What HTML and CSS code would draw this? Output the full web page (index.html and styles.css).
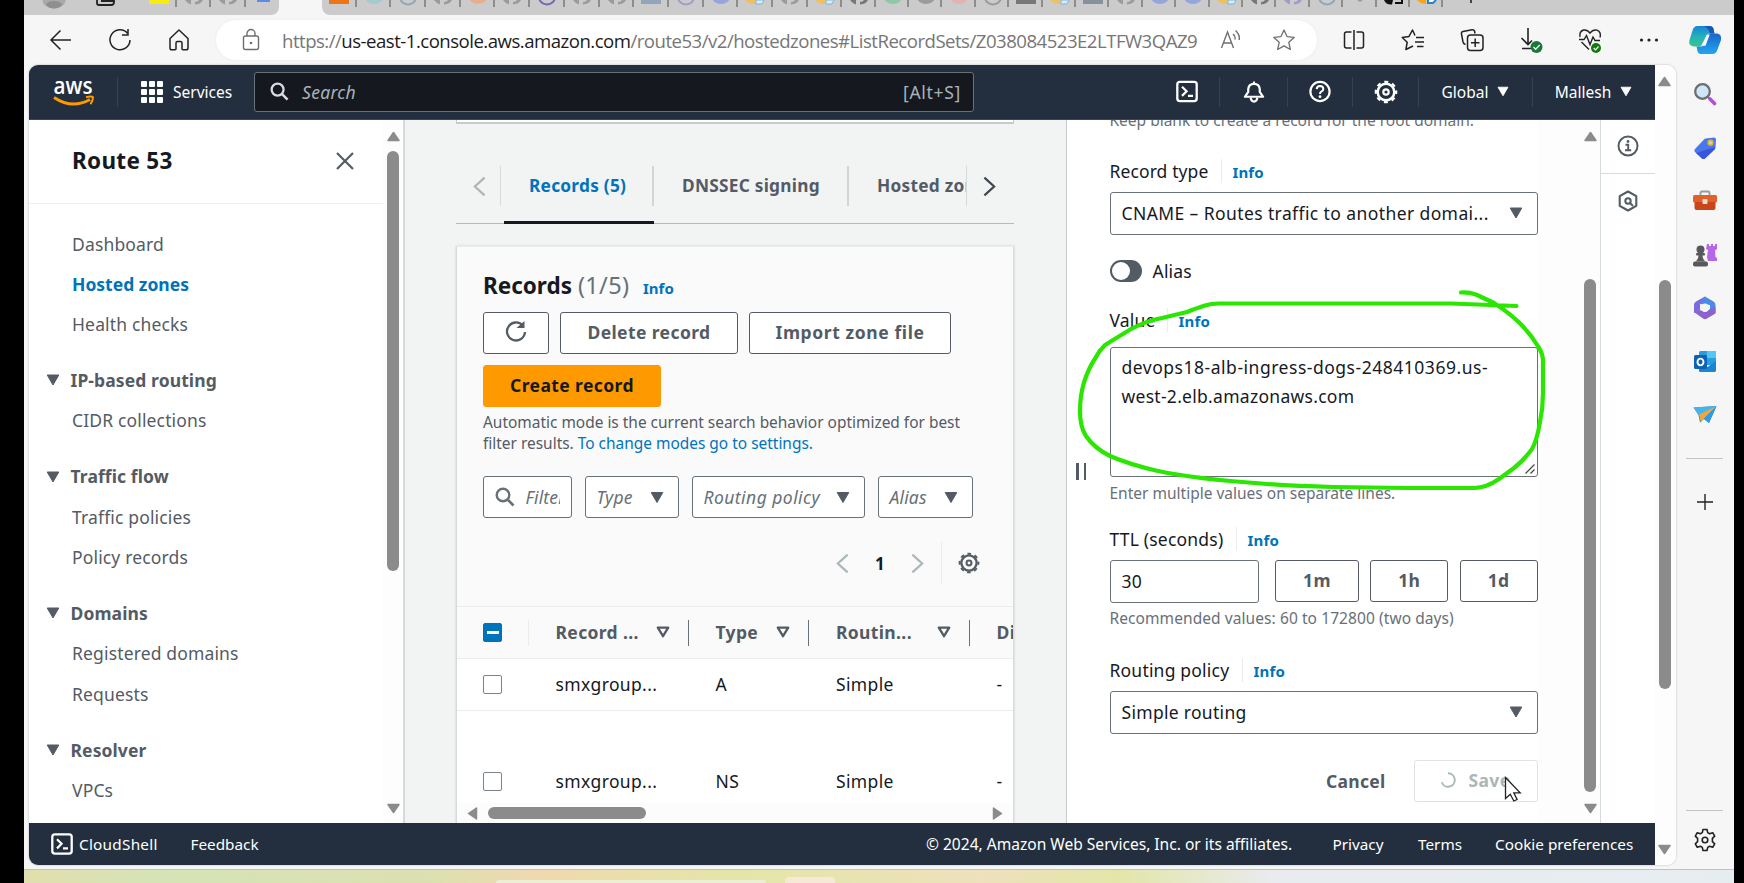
FILE: index.html
```html
<!DOCTYPE html>
<html lang="en">
<head>
<meta charset="utf-8">
<title>Route 53 Console</title>
<link rel="stylesheet" href="styles.css">
</head>
<body>
<svg class="defs" aria-hidden="true">
  <defs>
    <symbol id="down" viewBox="0 0 14 12"><path d="M1.200 1h11.600L7 11z" fill="currentColor" stroke="currentColor" stroke-linejoin="round"/></symbol>
    <symbol id="sort" viewBox="0 0 14 12"><path d="M1.800 1.600h10.400L7 10.200z" fill="none" stroke="currentColor" stroke-width="2.300" stroke-linejoin="round"/></symbol>
    <symbol id="scroll-up" viewBox="0 0 13 11"><path d="M6.5 1.5 12 9.5H1z" fill="#8b8b8b" stroke="#8b8b8b" stroke-width="1.5" stroke-linejoin="round"/></symbol>
    <symbol id="scroll-down" viewBox="0 0 13 11"><path d="M6.5 9.5 12 1.5H1z" fill="#8b8b8b" stroke="#8b8b8b" stroke-width="1.5" stroke-linejoin="round"/></symbol>
    <symbol id="lens" viewBox="0 0 20 20"><circle cx="8" cy="8" r="6.3" fill="none" stroke="currentColor" stroke-width="2.4"/><path d="m12.5 12.5 6 6" stroke="currentColor" stroke-width="2.6"/></symbol>
    <symbol id="terminal" viewBox="0 0 22 22"><rect x="1.3" y="1.3" width="19.4" height="19.4" rx="2.6" fill="none" stroke="currentColor" stroke-width="2.3"/><path d="m6 6.2 4.6 4.6L6 15.4M12 15.3h5" fill="none" stroke="currentColor" stroke-width="2.2"/></symbol>
    <symbol id="cog" viewBox="0 0 24 24"><circle cx="12" cy="12" r="8.300" fill="none" stroke="currentColor" stroke-width="2.500"/><circle cx="12" cy="12" r="10.200" fill="none" stroke="currentColor" stroke-width="2.200" stroke-dasharray="4 4.011" stroke-dashoffset="2"/><circle cx="12" cy="12" r="2.700" fill="none" stroke="currentColor" stroke-width="2.200"/></symbol>
    <symbol id="prev" viewBox="0 0 14 22"><path d="M12.500 1.500 2 11l10.500 9.500" fill="none" stroke="currentColor" stroke-width="2.400"/></symbol>
    <symbol id="next" viewBox="0 0 14 22"><path d="M1.500 1.500 12 11 1.500 20.500" fill="none" stroke="currentColor" stroke-width="2.400"/></symbol>
    <symbol id="t-ring" viewBox="0 0 22 6"><path d="M3 -3a8 7.500 0 0 0 16 0" fill="none" stroke="currentColor" stroke-width="2"/></symbol>
    <symbol id="t-blob" viewBox="0 0 22 6"><ellipse cx="11" cy="-3" rx="9" ry="7" fill="currentColor"/></symbol>
    <symbol id="t-box" viewBox="0 0 22 6"><path d="M1 0h20v4H1z" fill="currentColor"/></symbol>
    <symbol id="t-globe" viewBox="0 0 22 6"><path d="M2 0q2 3 6 4.500V0zM12 4.500Q18 4 20 0h-4q-1 2-4 2z" fill="currentColor"/></symbol>
    <symbol id="t-duo" viewBox="0 0 22 6"><path d="M1 0h10v4Q4 4 1 0z" fill="#ecc063"/><path d="M12 0h8l-2 4h-6z" fill="#dcecf4" stroke="#7cb5d4"/></symbol>
  </defs>
</svg>

<div class="window">
  <div class="tabstrip">
    <div class="tabs-left">
      <svg class="t-avatar" viewBox="0 0 24 9"><ellipse cx="12" cy="0" rx="11.500" ry="8.500" fill="#a9a9a9"/><path d="M4 5q1-4 8-4t8 4q-3 3.500-8 3.500T4 5z" fill="#8f8f8f"/></svg>
      <svg class="t-spaces" viewBox="0 0 22 7"><path d="M2 0v3q0 2 2 2h12q3 0 3-3V0M6 1h13" fill="none" stroke="#222" stroke-width="1.800"/></svg>
      <i class="tb c-yellow"><svg><use href="#t-box"/></svg></i>
      <i class="tb c-grey"><svg><use href="#t-globe"/></svg></i>
      <i class="tb c-grey"><svg><use href="#t-globe"/></svg></i>
      <i class="tb last c-blue"><svg viewBox="0 0 22 6"><path d="M5 0h13v2H5z" fill="currentColor"/></svg></i>
    </div>
    <div class="tab-active"></div>
    <div class="tabs-right">
      <i class="tb c-orange"><svg><use href="#t-box"/></svg></i>
      <i class="tb c-teal"><svg><use href="#t-blob"/></svg></i>
      <i class="tb c-steel"><svg><use href="#t-ring"/></svg></i>
      <i class="tb c-grey"><svg><use href="#t-globe"/></svg></i>
      <i class="tb c-peach"><svg><use href="#t-blob"/></svg></i>
      <i class="tb c-grey"><svg><use href="#t-globe"/></svg></i>
      <i class="tb c-purple"><svg><use href="#t-ring"/></svg></i>
      <i class="tb c-grey"><svg><use href="#t-globe"/></svg></i>
      <i class="tb c-grey"><svg><use href="#t-globe"/></svg></i>
      <i class="tb c-steel"><svg><use href="#t-box"/></svg></i>
      <i class="tb c-lilac"><svg><use href="#t-ring"/></svg></i>
      <i class="tb c-peri"><svg><use href="#t-blob"/></svg></i>
      <i class="tb"><svg><use href="#t-duo"/></svg></i>
      <i class="tb c-grey"><svg><use href="#t-globe"/></svg></i>
      <i class="tb"><svg><use href="#t-duo"/></svg></i>
      <i class="tb n c-dark"><svg><use href="#t-globe"/></svg></i>
      <i class="tb n c-green"><svg><use href="#t-blob"/></svg></i>
      <i class="tb n c-grey"><svg><use href="#t-blob"/></svg></i>
      <i class="tb n c-rose"><svg><use href="#t-blob"/></svg></i>
      <i class="tb n c-grey"><svg><use href="#t-ring"/></svg></i>
      <i class="tb n c-dark"><svg><use href="#t-box"/></svg></i>
      <i class="tb n"><svg><use href="#t-duo"/></svg></i>
      <i class="tb n c-slate"><svg><use href="#t-box"/></svg></i>
      <i class="tb n c-grey"><svg><use href="#t-globe"/></svg></i>
      <i class="tb n c-peri"><svg><use href="#t-blob"/></svg></i>
      <i class="tb n c-peri"><svg><use href="#t-blob"/></svg></i>
      <i class="tb n"><svg><use href="#t-duo"/></svg></i>
      <i class="tb n c-dark"><svg><use href="#t-globe"/></svg></i>
      <i class="tb n c-lilac"><svg><use href="#t-globe"/></svg></i>
      <i class="tb n c-steel"><svg><use href="#t-ring"/></svg></i>
      <i class="tb n c-grey"><svg viewBox="0 0 22 6"><path d="M8 0h6l-3 2z" fill="currentColor"/></svg></i>
      <i class="tb n c-black"><svg viewBox="0 0 22 6"><path d="M1 0q2 5 8 4.500L10 0z" fill="currentColor"/><path d="M12 3h7V0" fill="none" stroke="currentColor" stroke-width="2"/></svg></i>
      <i class="tb n"><svg viewBox="0 0 22 6"><path d="M1 0h9v4Q4 4 1 0z" fill="#f3a71c"/><path d="M12 0v3h5l3-3" fill="#fff" stroke="#2585c8" stroke-width="2"/></svg></i>
      <svg class="t-plus" viewBox="0 0 4 3"><path d="M2 0v3" stroke="#222" stroke-width="1.600"/></svg>
    </div>
  </div>

  <div class="toolbar">
    <svg class="i-back" viewBox="0 0 24 24"><path d="M22 12H2.500M11.500 2.500 2 12l9.500 9.500" fill="none" stroke="#222" stroke-width="1.500"/></svg>
    <svg class="i-reload" viewBox="0 0 24 24"><path d="M19.500 5.200A10 10 0 1 0 22 12M20 1v6h-6" fill="none" stroke="#222" stroke-width="1.500"/></svg>
    <svg class="i-home" viewBox="0 0 24 24"><path d="M3 10.500 12 2l9 8.500V20q0 1.800-1.800 1.800H16q-1 0-1-1V15q0-1.500-1.500-1.500h-3Q9 13.500 9 15v5.800q0 1-1 1H4.800Q3 21.800 3 20z" fill="none" stroke="#222" stroke-width="1.500" stroke-linejoin="round"/></svg>
    <div class="address">
      <svg class="i-lock" viewBox="0 0 20 24"><rect x="2.500" y="8" width="15" height="13.500" rx="2" fill="none" stroke="#6f6f6f" stroke-width="1.400"/><path d="M6 8V5.500a4 4 0 0 1 8 0V8" fill="none" stroke="#6f6f6f" stroke-width="1.400"/><circle cx="10" cy="15" r="1.300" fill="#6f6f6f"/></svg>
      <div class="url">https://<b>us-east-1.console.aws.amazon.com</b>/route53/v2/hostedzones#ListRecordSets/Z038084523E2LTFW3QAZ9</div>
      <svg class="i-read" viewBox="0 0 22 24"><path d="M1.500 20 7.500 4l6 16M3.500 15h8M13 6q2.500 2 2 5.500M15.500 2.500q4.500 4 3.800 9.500" fill="none" stroke="#6f6f6f" stroke-width="1.400"/></svg>
      <svg class="i-star" viewBox="0 0 24 24"><path d="m12 2 3 6.600 7.200.8-5.400 4.900 1.500 7.200L12 17.900l-6.300 3.600 1.500-7.200L1.800 9.400 9 8.600z" fill="none" stroke="#6f6f6f" stroke-width="1.300" stroke-linejoin="round"/></svg>
    </div>
    <div class="tool-icons">
      <svg viewBox="0 0 24 24"><path d="M9.500 4H4.500Q2.500 4 2.500 6v12q0 2 2 2h5M14.500 4h5q2 0 2 2v12q0 2-2 2h-5M12 2v20" fill="none" stroke="#222" stroke-width="1.500"/></svg>
      <svg viewBox="0 0 24 24"><path d="M14 7.500 11.500 2 8 8.400 1.200 9.500l5 4.800-1.300 7.200L12 18M15 9.500h8M14 14h9M16 18.500h6.500" fill="none" stroke="#222" stroke-width="1.500" stroke-linejoin="round"/></svg>
      <svg viewBox="0 0 24 24"><path d="M5.500 16.500Q3.500 16 3 14L1.500 6Q1 4 3 3.500L12 1.700q2-.3 2.600 1.500L15 5.500" fill="none" stroke="#222" stroke-width="1.500"/><rect x="7.500" y="7" width="15.500" height="15.500" rx="3" fill="#f6f6f6" stroke="#222" stroke-width="1.500"/><path d="M15.200 10.500v8.500M11 14.700h8.500" stroke="#222" stroke-width="1.500"/></svg>
      <svg viewBox="0 0 24 24"><path d="M9 0v16M2.500 10 9 16.500l4-4M3 20.500h9" fill="none" stroke="#222" stroke-width="1.600"/><circle cx="17.500" cy="19" r="6" fill="#157a35"/><path d="m14.500 19 2.200 2.200 4-4.200" fill="none" stroke="#fff" stroke-width="1.300"/></svg>
      <svg viewBox="0 0 24 24"><path d="M2 9Q1 3.500 5.500 2 9.500 1.500 12 5q3-4 7-2.800Q23.500 4 22 9.500M3.500 14 11 21.500M1 11.500h5l2.500-4 3.500 9L15 9l2 3.500h5" fill="none" stroke="#222" stroke-width="1.400"/><circle cx="18" cy="20" r="5" fill="#107c10"/><path d="m15.700 20 1.800 1.800 3-3.300" fill="none" stroke="#fff" stroke-width="1.200"/></svg>
      <svg viewBox="0 0 24 24"><g fill="#222"><circle cx="4.500" cy="12" r="1.600"/><circle cx="12" cy="12" r="1.600"/><circle cx="19.500" cy="12" r="1.600"/></g></svg>
      <svg class="copilot" viewBox="0 0 34 32">
        <defs><linearGradient id="cg1" x1="0" y1="0" x2="0" y2="1"><stop offset="0" stop-color="#1683d8"/><stop offset=".55" stop-color="#27b3b8"/><stop offset="1" stop-color="#35c58b"/></linearGradient><linearGradient id="cg2" x1="0" y1="0" x2="0" y2="1"><stop offset="0" stop-color="#1d63c8"/><stop offset="1" stop-color="#21a6f0"/></linearGradient></defs>
        <path d="M9 1h13q3 0 4 3l1 5h-5q-3 0-4 4l-3 7q-1 3-5 3H5q-6-1-4.500-7L4 5q1.500-4 5-4z" fill="url(#cg1)"/>
        <path d="M25 31H13q-3 0-4-3l-1-5h4q3 0 4-4l3-7q1-3 5-3h6q5 1 4 7l-4 11q-1.500 4-5 4z" fill="url(#cg2)"/>
        <path d="M16 1h6q3 0 4 3l1 5h-5q-1-6-6-8z" fill="#1856b5"/><path d="m18.500 12-4.500 11h-2q3 0 4-4l2-5z" fill="#e9fbff"/><path d="M19 10.500h3L17.500 22h-4.500z" fill="#fff"/>
      </svg>
    </div>
  </div>

  <div class="browser-body">
    <div class="page">
      <div class="console">
        <header class="nav">
          <svg class="logo" viewBox="0 0 42 30"><text x="0.500" y="15.500" class="logo-text" textLength="39" lengthAdjust="spacingAndGlyphs">aws</text><path d="M1 19.500q18 12 36 2" fill="none" stroke="#f90" stroke-width="3"/><path d="M33 19.200q5.500-1.300 7 0 0 3.500-2.500 7" fill="none" stroke="#f90" stroke-width="2"/></svg>
          <i class="nsep s1"></i>
          <svg class="i-grid" viewBox="0 0 22 22"><g fill="#fff"><rect width="6" height="6" rx="1"/><rect x="8" width="6" height="6" rx="1"/><rect x="16" width="6" height="6" rx="1"/><rect y="8" width="6" height="6" rx="1"/><rect x="8" y="8" width="6" height="6" rx="1"/><rect x="16" y="8" width="6" height="6" rx="1"/><rect y="16" width="6" height="6" rx="1"/><rect x="8" y="16" width="6" height="6" rx="1"/><rect x="16" y="16" width="6" height="6" rx="1"/></g></svg>
          <span class="services">Services</span>
          <div class="search"><svg><use href="#lens"/></svg><em>Search</em><span>[Alt+S]</span></div>
          <div class="nav-right">
            <span class="nicon n1"><svg><use href="#terminal"/></svg></span>
            <span class="nicon n2"><svg viewBox="0 0 22 24"><path d="M11 1.500v2M1.500 17.500h19L17 12.500V9.500q-.5-5.500-6-5.500T5 9.500v3z" fill="none" stroke="#fff" stroke-width="2.300" stroke-linejoin="round"/><path d="M7.500 18.500q.5 4 3.500 4t3.500-4" fill="none" stroke="#fff" stroke-width="2.300"/></svg></span>
            <span class="nicon n3"><svg viewBox="0 0 22 22"><circle cx="11" cy="11" r="9.600" fill="none" stroke="#fff" stroke-width="2.200"/><path d="M7.700 8.600q.2-3 3.300-3 3.200.1 3.300 2.800 0 1.800-2 2.800-1.300.7-1.300 2.300" fill="none" stroke="#fff" stroke-width="2"/><circle cx="11" cy="16.200" r="1.400" fill="#fff"/></svg></span>
            <span class="nicon n4"><svg><use href="#cog"/></svg></span>
            <span class="nmenu n5">Global<svg><use href="#down"/></svg></span>
            <span class="nmenu n6">Mallesh<svg><use href="#down"/></svg></span>
          </div>
        </header>

        <div class="work">
          <aside class="side">
            <div class="side-content">
              <div class="side-head"><h1>Route 53</h1><svg viewBox="0 0 18 18"><path d="m1 1 16 16M17 1 1 17" stroke="#545b64" stroke-width="2.200"/></svg></div>
              <ul class="group"><li>Dashboard</li><li class="on">Hosted zones</li><li>Health checks</li></ul>
              <h2><svg><use href="#down"/></svg>IP-based routing</h2>
              <ul><li>CIDR collections</li></ul>
              <h2><svg><use href="#down"/></svg>Traffic flow</h2>
              <ul><li>Traffic policies</li><li>Policy records</li></ul>
              <h2><svg><use href="#down"/></svg>Domains</h2>
              <ul><li>Registered domains</li><li>Requests</li></ul>
              <h2><svg><use href="#down"/></svg>Resolver</h2>
              <ul><li>VPCs</li></ul>
            </div>
            <div class="vscroll side-scroll"><svg><use href="#scroll-up"/></svg><i></i><svg class="end"><use href="#scroll-down"/></svg></div>
          </aside>

          <main class="main">
            <div class="prev-card"></div>
            <div class="tabs">
              <span class="tab-prev"><svg><use href="#prev"/></svg></span>
              <a class="tab active"><span>Records (5)</span></a>
              <a class="tab second"><span>DNSSEC signing</span></a>
              <a class="tab third"><span>Hosted zone tags</span></a>
              <span class="tab-next"><svg><use href="#next"/></svg></span>
            </div>
            <section class="card">
              <div class="card-head">
                <div class="title"><h3>Records</h3><span class="count">(1/5)</span><a>Info</a></div>
                <div class="btns">
                  <button class="btn b-refresh"><svg viewBox="0 0 22 22"><path d="M18 4.800A9 9 0 1 0 20 11" fill="none" stroke="#545b64" stroke-width="2.300"/><path d="M19.500 0v7h-8z" fill="#545b64"/></svg></button>
                  <button class="btn b-delete">Delete record</button>
                  <button class="btn b-import">Import zone file</button>
                  <button class="btn b-create">Create record</button>
                </div>
                <p class="mode">Automatic mode is the current search behavior optimized for best<br><span>filter results. </span><a>To change modes go to settings.</a></p>
                <div class="filters">
                  <div class="filter f-text"><svg class="lens"><use href="#lens"/></svg><em>Filter</em></div>
                  <div class="filter f-type"><em>Type</em><svg><use href="#down"/></svg></div>
                  <div class="filter f-route"><em>Routing policy</em><svg><use href="#down"/></svg></div>
                  <div class="filter f-alias"><em>Alias</em><svg><use href="#down"/></svg></div>
                </div>
                <div class="pager"><svg class="chev"><use href="#prev"/></svg><b>1</b><svg class="chev"><use href="#next"/></svg><i></i><svg class="gear"><use href="#cog"/></svg></div>
              </div>
              <div class="trow thead">
                <div class="c-check"><span class="cb mixed"></span></div>
                <div>Record ...<svg><use href="#sort"/></svg></div>
                <div>Type<svg><use href="#sort"/></svg></div>
                <div>Routin...<svg><use href="#sort"/></svg></div>
                <div>Differentiator</div>
              </div>
              <div class="trow"><div class="c-check"><span class="cb"></span></div><div>smxgroup...</div><div>A</div><div>Simple</div><div>-</div></div>
              <div class="trow tall"><div class="c-check"><span class="cb"></span></div><div>smxgroup...</div><div>NS</div><div>Simple</div><div>-</div></div>
              <div class="hscroll"><svg viewBox="0 0 11 13"><path d="M1.500 6.500 9.500 1v11z" fill="#8b8b8b" stroke="#8b8b8b" stroke-width="1.500" stroke-linejoin="round"/></svg><i></i><svg class="end" viewBox="0 0 11 13"><path d="M9.500 6.500 1.500 1v11z" fill="#8b8b8b" stroke="#8b8b8b" stroke-width="1.500" stroke-linejoin="round"/></svg></div>
            </section>
          </main>

          <section class="panel">
            <div class="handle"><i></i><i></i></div>
            <div class="form">
              <p class="hint keep">Keep blank to create a record for the root domain.</p>
              <div class="label l1"><span>Record type</span><a>Info</a></div>
              <div class="select"><span class="cname">CNAME – Routes traffic to another domai...</span><svg><use href="#down"/></svg></div>
              <div class="toggle-row"><span class="toggle"></span><span>Alias</span></div>
              <div class="label l2"><span>Value</span><a>Info</a></div>
              <div class="textarea"><span class="wide">devops18-alb-ingress-dogs-248410369.us-</span><br>west-2.elb.amazonaws.com<svg viewBox="0 0 10 10"><path d="m.5 9.500 9-9M5.500 9.500l4-4" stroke="#444" stroke-width="1.200"/></svg></div>
              <p class="hint h1">Enter multiple values on separate lines.</p>
              <div class="label l3"><span>TTL (seconds)</span><a>Info</a></div>
              <div class="ttl"><div class="input">30</div><button class="btn">1m</button><button class="btn">1h</button><button class="btn">1d</button></div>
              <p class="hint h2">Recommended values: 60 to 172800 (two days)</p>
              <div class="label l4"><span>Routing policy</span><a>Info</a></div>
              <div class="select"><span>Simple routing</span><svg><use href="#down"/></svg></div>
              <div class="actions"><span class="cancel">Cancel</span><button class="btn save"><svg viewBox="0 0 18 18"><path d="M9 1.500a7.500 7.500 0 1 1-7 10" fill="none" stroke="#aab7b8" stroke-width="2.200"/></svg>Save</button></div>
            </div>
            <div class="vscroll panel-scroll"><svg><use href="#scroll-up"/></svg><i></i><svg class="end"><use href="#scroll-down"/></svg></div>
          </section>

          <aside class="tools">
            <div><svg viewBox="0 0 22 22"><circle cx="11" cy="11" r="9.500" fill="none" stroke="#545b64" stroke-width="2"/><path d="M8.500 9.800h2.700v5.500M8 15.300h6.200" fill="none" stroke="#545b64" stroke-width="1.900"/><circle cx="11" cy="6.500" r="1.400" fill="#545b64"/></svg></div>
            <div><svg viewBox="0 0 22 22"><path d="m11 1.500 8.300 4.700v9.600L11 20.500l-8.300-4.700V6.200z" fill="none" stroke="#545b64" stroke-width="2.100" stroke-linejoin="round"/><circle cx="11" cy="11" r="2.700" fill="none" stroke="#545b64" stroke-width="2"/><path d="m13 13 3 3" stroke="#545b64" stroke-width="2"/></svg></div>
          </aside>
        </div>

        <footer class="foot">
          <svg><use href="#terminal"/></svg>
          <span class="cs">CloudShell</span><span class="fb">Feedback</span>
          <span class="copy">© 2024, Amazon Web Services, Inc. or its affiliates.</span><span class="pv">Privacy</span><span class="tm">Terms</span><span class="ck">Cookie preferences</span>
        </footer>
      </div>
      <div class="vscroll page-scroll"><svg><use href="#scroll-up"/></svg><i></i><svg class="end"><use href="#scroll-down"/></svg></div>
    </div>

    <aside class="edgebar">
      <svg viewBox="0 0 24 24"><circle cx="9.500" cy="9.500" r="7.300" fill="#cfe6f7" stroke="#6d6d72" stroke-width="2.300"/><path d="m15 15 2 2" stroke="#777" stroke-width="2"/><path d="m17 17 4.500 4.500" stroke="#b74be8" stroke-width="3.600" stroke-linecap="round"/></svg>
      <svg viewBox="0 0 24 24"><path d="M12.500 2.500 21 1.500q2 0 2 2l-.5 8q0 1-1 2L12 22.500q-1.500 1-3 0L2 16q-1.500-1.500 0-3l9-9.500q.7-.8 1.500-1z" fill="#4a78ec"/><path d="m3 17 19-6-.5 2.500L12 22.500q-1.500 1-3 0z" fill="#3a56d8"/><circle cx="17.500" cy="6.700" r="2.200" fill="#c9d8ff" stroke="#e4b43c" stroke-width="1.800"/></svg>
      <svg viewBox="0 0 24 24"><path d="M7.500 6.500V4q0-1.500 1.500-1.500h6q1.500 0 1.500 1.500v2.500" fill="none" stroke="#9a9a9a" stroke-width="1.800"/><rect y="6" width="24" height="7.500" rx="1.500" fill="#e0622a"/><path d="M1.500 13h21v6q0 2-2 2h-17q-2 0-2-2z" fill="#c9461a"/><rect x="9.500" y="10" width="5" height="5" rx="1" fill="#e4dad6"/></svg>
      <svg viewBox="0 0 24 24"><path d="M14 1h2v2h2V1h2v2h2V1h2v5l-2 1.500.500 6.500 1.500 1v3h-9l-1-4 1-7-2-1z" fill="#b667e6"/><g fill="#58585c"><circle cx="7.500" cy="6.500" r="4"/><rect x="3" y="10" width="9" height="2.500" rx="1"/><path d="M5.500 12h4q0 4 3 6.500h-10q3-2.500 3-6.500z"/><rect x="0" y="18.500" width="15" height="5" rx="2"/></g></svg>
      <svg viewBox="0 0 24 24"><path d="M12 .5 3 5.500Q1 6.500 1 9v8l6-3V8l7-4z" fill="#7a6ce0"/><path d="m12 .5 8.500 5Q22.500 6.500 22.500 9v8L17 13V9L7 8z" fill="#4a8be8"/><path d="m1 16 9 6.500q2 1.500 4 0l8.500-5V11L17 13l-5 3-5-2z" fill="#8c63cc"/><circle cx="12" cy="11.800" r="4.200" fill="#f6f6f6"/></svg>
      <svg viewBox="0 0 24 24"><rect x="6" y="1" width="17" height="14" rx="1.500" fill="#279ee0"/><path d="M14 1h9v7h-9z" fill="#55c5f3"/><path d="M6 12l8.500 5L23 11v9.500q0 1.500-1.500 1.500h-14Q6 22 6 20.500z" fill="#1b85d2"/><rect x="1" y="5" width="13" height="14" rx="1.500" fill="#0e62b4"/><ellipse cx="7.500" cy="12" rx="3" ry="3.400" fill="none" stroke="#fff" stroke-width="1.900"/></svg>
      <svg viewBox="0 0 24 24"><path d="M.5 4.500 23.500 3 16 20l-5-4-4 3.500L5.500 12z" fill="#2484d8"/><path d="M.5 4.500 23.500 3 6 12z" fill="#45b4ee"/><path d="M23.500 3 6 11.500l2 8 3-4z" fill="#f2a73b"/><path d="M23.500 3 16 20l-5-4z" fill="#2f9be6"/></svg>
      <hr>
      <svg class="add" viewBox="0 0 24 24"><path d="M12 4v16M4 12h16" stroke="#222" stroke-width="1.400"/></svg>
      <hr class="low">
      <svg class="settings" viewBox="0 0 24 24"><path d="M10 1.500h4l.7 3.100 2 1.100 3-1 2 3.500-2.300 2.200v3.200l2.300 2.200-2 3.500-3-1-2 1.100-.7 3.100h-4l-.7-3.100-2-1.100-3 1-2-3.500 2.300-2.200v-3.200L2.300 8.200l2-3.500 3 1 2-1.100z" fill="none" stroke="#222" stroke-width="1.600" stroke-linejoin="round"/><circle cx="12" cy="12" r="2.800" fill="none" stroke="#222" stroke-width="1.600"/></svg>
    </aside>
  </div>
  <div class="desktop"><i class="d1"></i><i class="d2"></i></div>
</div>

<svg class="marker" viewBox="0 0 480 210"><path d="M390 6.500Q398 6 405 8.500L423 17Q453 36 467.500 61 472 68 472 75V107Q472 122 469 136 466 154 461 163 453 174 443 182L428 193Q415 202 403 202L337 202 262 201Q220 200 190 197.500 125 193 87 185 60 179 39 170 23 162 15 150 9 141 9 125 9 95 25 71 28 65 34 59L60 43Q75 35 91 32L116 26Q123 23 134 19.500 140 17.500 148 17.500H380L445.500 20"/></svg>
<svg class="cursor" viewBox="0 0 18 27"><path d="M1.500 1.500v21l4.800-4.300 3.500 6.800 3.300-1.500-3.300-6.700h6.400z" fill="#fff" stroke="#222" stroke-width="1.300"/></svg>
</body>
</html>
```
FILE: styles.css
```css
* { box-sizing: border-box; }
body { margin: 0; width: 1744px; height: 883px; overflow: hidden; background: #000; position: relative;
  font-family: "Noto Sans", "Open Sans", sans-serif; font-size: 17.5px; color: #16191f; }
h1, h2, h3, p, ul { margin: 0; padding: 0; }
ul { list-style: none; }
svg { display: block; flex: none; }
i { display: block; flex: none; }
button { font-family: inherit; margin: 0; padding: 0; }
.defs { position: absolute; width: 0; height: 0; }
.window { margin-left: 24px; width: 1710px; height: 883px; background: #f6f6f6; display: flex; flex-direction: column; overflow: hidden; }

/* tab strip */
.tabstrip { height: 15px; flex: none; display: flex; }
.tabs-left { width: 255px; background: #cbcbcb; border-bottom-right-radius: 8px; display: flex; }
.tab-active { width: 43px; }
.tabs-right { flex: 1; background: #cbcbcb; border-bottom-left-radius: 8px; display: flex; }
.tb { width: 34.7px; height: 7px; border-right: 2px solid #8d8d8d; padding-left: 6px; }
.tb.n { width: 33.4px; }
.tb.last { border: 0; }
.tb svg { width: 22px; height: 6px; }
.t-avatar { width: 24px; height: 9px; margin-left: 18px; }
.t-spaces { width: 22px; height: 7px; margin: 0 25px 0 29px; }
.t-plus { width: 4px; height: 3px; margin-left: 26px; }
.c-yellow { color: #f6ec13; } .c-grey { color: #9b9b9b; } .c-blue { color: #5b8de6; }
.c-orange { color: #ee7517; } .c-teal { color: #a3cbcb; } .c-steel { color: #93a5b8; }
.c-peach { color: #e8ae8c; } .c-purple { color: #7567b4; } .c-lilac { color: #a39acb; }
.c-peri { color: #96a4dc; } .c-dark { color: #777; } .c-green { color: #8fc7a8; }
.c-rose { color: #e2b4b0; } .c-slate { color: #87919b; } .c-black { color: #111; }

/* toolbar */
.toolbar { height: 50px; flex: none; display: flex; align-items: center; }
.i-back { width: 24px; height: 24px; margin-left: 25px; }
.i-reload { width: 24px; height: 24px; margin-left: 35px; }
.i-home { width: 24px; height: 24px; margin-left: 35px; }
.address { width: 1101px; height: 40px; border-radius: 20px; background: #fff; margin-left: 25px; display: flex; align-items: center; box-shadow: 0 0 3px #e8e8e8; }
.i-lock { width: 20px; height: 24px; margin-left: 25px; }
.url { width: 918px; margin-left: 21px; font: 18.600px "Open Sans", "Noto Sans", sans-serif; color: #767676; white-space: nowrap; letter-spacing: -.51px; }
.url b { font-weight: 400; color: #1b1b1b; }
.i-read { width: 22px; height: 24px; margin-left: 20px; }
.i-star { width: 24px; height: 24px; margin-left: 30px; }
.tool-icons { display: flex; align-items: center; margin-left: 25px; gap: 35px; }
.tool-icons svg { width: 24px; height: 24px; overflow: visible; }
.tool-icons .copilot { width: 32px; height: 32px; margin-left: -7px; }

/* browser body */
.browser-body { height: 805px; flex: none; display: flex; border-bottom: 1px solid #bfc4bb; }
.page { margin-left: 5px; width: 1647px; height: 800px; display: flex; border-radius: 9px; overflow: hidden; background: #fff; box-shadow: 0 0 2px #aaa; flex: none; }
.console { width: 1626px; flex: none; display: flex; flex-direction: column; }
.vscroll { display: flex; flex-direction: column; align-items: center; flex: none; background: #fdfdfd; }
.vscroll svg { width: 13px; height: 11px; }
.vscroll i { width: 12px; border-radius: 6px; background: #8b8b8b; }
.vscroll .end { margin-top: auto; }
.page-scroll { width: 21px; padding: 11px 2px 10px 0; }
.page-scroll i { margin-top: 193px; height: 409px; }

/* nav */
.nav { height: 54.500px; flex: none; background: #232f3e; display: flex; align-items: center; color: #fff; border-bottom: 1px solid #3c4653; }
.logo { width: 42px; height: 30px; margin: 2px 0 0 24px; overflow: visible; }
.logo-text { font: 600 23px "Open Sans", "Noto Sans", sans-serif; fill: #fff; }
.nsep { width: 1px; height: 30px; background: #36424f; margin-left: 22px; }
.i-grid { width: 22px; height: 22px; margin-left: 23px; }
.services { width: 89px; padding-left: 10px; font-size: 15.500px; white-space: nowrap; }
.search { width: 720px; height: 40px; margin-left: 2px; background: #15191f; border: 1px solid #69727a; border-radius: 3px; display: flex; align-items: center; color: #aab2ba; font-size: 17.500px; }
.search svg { width: 19px; height: 19px; margin-left: 15px; color: #d8dcdf; }
.search em { margin-left: 13px; letter-spacing: .3px; }
.search span { margin-left: auto; padding-right: 12px; letter-spacing: .7px; }
.nav-right { display: flex; align-items: center; margin-left: 181px; }
.nicon, .nmenu { height: 30px; display: flex; align-items: center; justify-content: center; border-right: 1px solid #36424f; font-size: 15.500px; }
.nicon svg { width: 22px; height: 23px; }
.n1 { width: 65px; } .n2 { width: 68px; } .n3 { width: 65px; } .n4 { width: 66px; }
.n4 svg { width: 24px; height: 24px; }
.nmenu svg { width: 12px; height: 11px; }
.n5 { width: 114px; gap: 9px; } .n6 { width: 121px; gap: 9px; border: 0; }

/* layout */
.work { height: 703.500px; flex: none; display: flex; overflow: hidden; }
.side { width: 376px; display: flex; border-right: 2px solid #d5dbdb; flex: none; }
.side-content { flex: 1; overflow: hidden; color: #545b64; letter-spacing: .15px; }
.side-head { height: 84.500px; display: flex; align-items: center; padding: 0 29px 0 43px; border-bottom: 1px solid #f0f0f0; margin-bottom: 19.500px; }
.side-head h1 { font-size: 22.500px; line-height: 30px; color: #16191f; flex: 1; letter-spacing: .3px; }
.side-head svg { width: 18px; height: 18px; }
.side li { height: 40.300px; line-height: 40.300px; padding-left: 43px; white-space: nowrap; }
.side li.on { color: #0073bb; font-weight: 700; letter-spacing: 0; }
.side h2 { height: 40.300px; line-height: 40.300px; margin-top: 15.700px; padding-left: 17px; display: flex; align-items: center; gap: 10.500px; font-size: 17.500px; font-weight: 700; white-space: nowrap; letter-spacing: .1px; }
.side h2 svg { width: 14px; height: 12px; }
.side-scroll { width: 20px; padding: 11px 0 9.500px; }
.side-scroll i { margin-top: 9.500px; height: 420px; }

.main { width: 661px; flex: none; background: #f2f3f3; padding: 0 52.500px 0 51px; overflow: hidden; }
.prev-card { height: 4px; background: #fff; border: 1px solid #c6cbcb; border-width: 0 1px 2px; }
.tabs { height: 100.500px; padding-top: 42.500px; border-bottom: 1px solid #b5bbbb; display: flex; font-weight: 700; font-size: 17.300px; letter-spacing: .25px; color: #545b64; white-space: nowrap; }
.tab-prev, .tab-next { height: 40px; display: flex; align-items: center; }
.tab-prev { width: 45px; padding-left: 16.500px; border-right: 1px solid #d5dbdb; margin-right: 3px; color: #b0b5b8; }
.tab-next { width: 46px; padding-left: 16px; border-left: 1px solid #d5dbdb; color: #414750; }
.tab-prev svg, .tab-next svg { width: 13px; height: 21px; }
.tab { height: 58px; flex: none; overflow: hidden; }
.tab span { display: block; height: 40px; line-height: 39px; border-right: 2px solid #d0d5d5; }
.tab.active { width: 150px; border-bottom: 3px solid #16191f; color: #0073bb; }
.tab.active span { padding-left: 25px; }
.tab.second { width: 195px; } .tab.second span { padding-left: 28px; }
.tab.third { width: 117px; } .tab.third span { padding-left: 28px; border: 0; overflow: hidden; }

.card { margin-top: 22px; height: 577px; background: #fff; border: 1px solid #d5dbdb; border-bottom: 0; border-top-color: #eaeded; overflow: hidden; box-shadow: 0 0 2px #c8cdcd; }
.card-head { height: 359px; background: #fafafa; padding: 23px 0 0 26px; }
.title { display: flex; height: 33px; align-items: flex-start; line-height: 31px; }
.title h3 { font-size: 22.500px; width: 95px; }
.count { font-size: 23.500px; width: 65px; color: #687078; font-weight: 400; letter-spacing: .3px; }
.title a { font-size: 15px; font-weight: 700; color: #0073bb; padding-top: 2.500px; }
.btns { display: flex; flex-wrap: wrap; gap: 11px; margin-top: 9px; }
.btn { height: 42px; border: 1px solid #545b64; border-radius: 3px; background: #fff; color: #545b64; font-size: 17.500px; letter-spacing: .4px; font-weight: 700; display: flex; align-items: center; justify-content: center; white-space: nowrap; padding-bottom: 2px; }
.b-refresh { width: 66px; } .b-refresh svg { width: 22px; height: 22px; }
.b-delete { width: 178px; } .b-import { width: 202px; letter-spacing: .6px; }
.b-create { width: 178px; background: #f90; border-color: #f90; color: #16191f; }
.mode { margin-top: 5px; font-size: 15.450px; line-height: 21px; color: #545b64; white-space: nowrap; }
.mode a { color: #0073bb; }
.filters { display: flex; gap: 13px; margin-top: 22px; }
.filter { height: 42px; border: 1px solid #687078; border-radius: 3px; background: #fff; display: flex; align-items: center; color: #687078; padding: 0 14px 0 11px; justify-content: space-between; white-space: nowrap; font-size: 17.500px; }
.filter em { padding-bottom: 1px; letter-spacing: .15px; }
.filter svg { width: 14px; height: 13px; color: #545b64; }
.filter .lens { width: 20px; height: 20px; color: #687078; }
.f-text { width: 88.500px; } .filter.f-text em { width: 34px; overflow: hidden; margin-right: -3px; }
.f-type { width: 94px; } .f-route { width: 173px; } .f-alias { width: 95px; }
.f-route em { letter-spacing: .45px; }
.pager { display: flex; align-items: center; height: 42px; margin-top: 24px; padding-left: 353px; }
.pager b { width: 61.500px; text-align: center; font-size: 17px; }
.chev { width: 13px; height: 21px; color: #aab7b8; }
.pager i { width: 1px; height: 42px; background: #eaeded; margin: 0 16.500px 0 17px; }
.gear { width: 22px; height: 22px; color: #545b64; }

.trow { display: grid; grid-template-columns: 71.500px 160px 120.500px 160.500px 160px; height: 52px; align-items: center; border-bottom: 1px solid #eaeded; font-size: 17.500px; letter-spacing: .35px; }
.trow > div { padding-left: 27px; height: 26px; line-height: 25px; display: flex; align-items: center; white-space: nowrap; padding-bottom: 1px; }
.trow > div.c-check { padding-left: 26px; padding-bottom: 0; }
.thead { height: 53px; background: #fafafa; border-top: 1px solid #eaeded; font-weight: 700; color: #545b64; }
.thead > div { border-right: 1px solid #687078; }
.thead > div.c-check { border-color: #eaeded; }
.thead svg { width: 14px; height: 12px; margin-left: auto; margin-right: 18px; }
.cb { width: 19px; height: 19px; border: 1.500px solid #7b848c; border-radius: 2px; background: #fff; }
.cb.mixed { background: #0073bb; border-color: #0073bb; display: flex; align-items: center; justify-content: center; }
.cb.mixed::after { content: ""; width: 12px; height: 3px; background: #fff; }
.tall { height: 92px; padding-top: 49px; border: 0; }
.hscroll { height: 20px; background: #fcfcfc; display: flex; align-items: center; padding: 0 10px; }
.hscroll svg { width: 11px; height: 13px; }
.hscroll i { width: 158px; height: 12px; border-radius: 6px; background: #8b8b8b; margin-left: 10px; }
.hscroll .end { margin-left: auto; }

/* right panel */
.panel { width: 535px; flex: none; display: flex; border-left: 1px solid #c6cbcb; border-right: 1px solid #d5dbdb; }
.handle { width: 42.500px; display: flex; align-items: center; gap: 5px; padding-left: 9px; }
.handle i { width: 2.500px; height: 17px; background: #545b64; }
.form { width: 428px; flex: none; letter-spacing: .2px; }
.hint { font-size: 15.500px; line-height: 20px; color: #687078; white-space: nowrap; letter-spacing: 0; position: relative; top: -1px; }
.h2 { letter-spacing: .08px; }
.keep { margin-top: -8.500px; }
.label { display: flex; height: 24px; align-items: center; white-space: nowrap; padding-bottom: 2px; }
.label span { border-right: 1px solid #eaeded; line-height: 24px; }
.label a { font-size: 15px; font-weight: 700; color: #0073bb; padding: 1px 0 0 11px; }
.l1 { margin: 29px 0 8px; letter-spacing: .1px; } .l1 span { width: 112px; }
.l2 { margin: 26px 0 14px; } .l2 span { width: 58px; }
.l3 { margin: 24.500px 0 8px; } .l3 span { width: 127px; }
.l4 { margin: 30.500px 0 8px; } .l4 span { width: 133px; }
.select { height: 42.500px; border: 1px solid #687078; border-radius: 3px; display: flex; align-items: center; padding: 0 14px 1px 11px; white-space: nowrap; letter-spacing: .3px; }
.cname { letter-spacing: .4px; }
.select svg { width: 14px; height: 12px; margin-left: auto; color: #545b64; }
.toggle-row { display: flex; height: 24px; align-items: center; margin-top: 24.500px; gap: 11px; line-height: 22px; }
.toggle { width: 32px; height: 22px; border-radius: 11px; background: #545b64; padding: 2px; }
.toggle::after { content: ""; display: block; width: 18px; height: 18px; border-radius: 9px; background: #fff; }
.textarea { height: 129.500px; border: 1px solid #687078; border-radius: 3px; padding: 5px 11px; line-height: 29px; white-space: nowrap; position: relative; letter-spacing: .28px; }
.wide { letter-spacing: .52px; }
.textarea svg { position: absolute; right: 2px; bottom: 2px; width: 10px; height: 10px; }
.h1 { margin-top: 7px; } .h2 { margin-top: 6px; }
.ttl { display: flex; height: 42.500px; }
.input { width: 150px; height: 42.500px; border: 1px solid #687078; border-radius: 3px; padding-left: 11px; line-height: 40px; margin-right: 16px; }
.ttl .btn { width: 78px; margin-right: 11.500px; }
.ttl .btn:nth-child(2) { width: 84px; }
.ttl .btn:last-child { margin: 0; }
.actions { display: flex; margin-top: 26.500px; align-items: center; justify-content: flex-end; }
.cancel { font-weight: 700; font-size: 17.500px; letter-spacing: .3px; color: #545b64; margin-right: 28px; padding-bottom: 1px; }
.save { width: 124px; color: #aab7b8; border-color: #dfe3e3; gap: 12px; }
.save svg { width: 16px; height: 16px; }
.panel-scroll { flex: 1; padding: 11px 0 9.500px; padding-left: 43px; }
.panel-scroll i { margin-top: 137.500px; height: 513px; }

.tools { flex: 1; background: #fff; }
.tools div { height: 54px; display: flex; align-items: center; justify-content: center; border-bottom: 1px solid #d5dbdb; }
.tools div + div { border: 0; }
.tools svg { width: 22px; height: 22px; }

.foot { height: 42px; flex: none; background: #232f3e; color: #fff; display: flex; align-items: center; font-size: 15.300px; white-space: nowrap; padding: 0 0 1px 22px; }
.foot svg { width: 22px; height: 22px; }
.cs { width: 117.500px; padding-left: 6px; letter-spacing: .25px; }
.fb { width: 735.500px; }
.copy { width: 406.500px; font-size: 15.550px; } .pv { width: 85.500px; } .tm { width: 77px; }

/* browser side rail */
.edgebar { width: 57px; display: flex; flex-direction: column; align-items: center; padding-top: 17px; }
.edgebar svg { width: 24px; height: 24px; margin-bottom: 29.500px; }
.edgebar hr { width: 37px; height: 1px; border: 0; background: #c4c4c4; margin: 1px 0 0; flex: none; }
.edgebar .add { margin: 31px 0 0; }
.edgebar .low { margin-top: 296px; }
.edgebar .settings { margin: 17px 0 0; }

.desktop { flex: 1; display: flex; align-items: flex-end; background: linear-gradient(90deg, #e2dfae 0, #d5e4b6 8%, #dde0b0 24%, #f0d9ae 30%, #e3e6a8 42%, #eee1bc 56%, #e3e6a8 64%, #e9ebee 73%, #e6edf0 100%); }
.d1 { width: 270px; height: 3px; margin-left: 472px; border-radius: 8px 8px 0 0; background: #ecefd3; }
.d2 { width: 50px; height: 6px; margin-left: 19px; border-radius: 4px 4px 0 0; background: #f6ead6; }

/* hand-drawn highlight and pointer, floating over the page */
.marker { position: absolute; left: 1070.500px; top: 286px; width: 480px; height: 210px; }
.marker path { fill: none; stroke: #2be600; stroke-width: 4.200; stroke-linecap: round; stroke-linejoin: round; }
.cursor { position: absolute; left: 1504px; top: 776px; width: 18px; height: 27px; }
```
